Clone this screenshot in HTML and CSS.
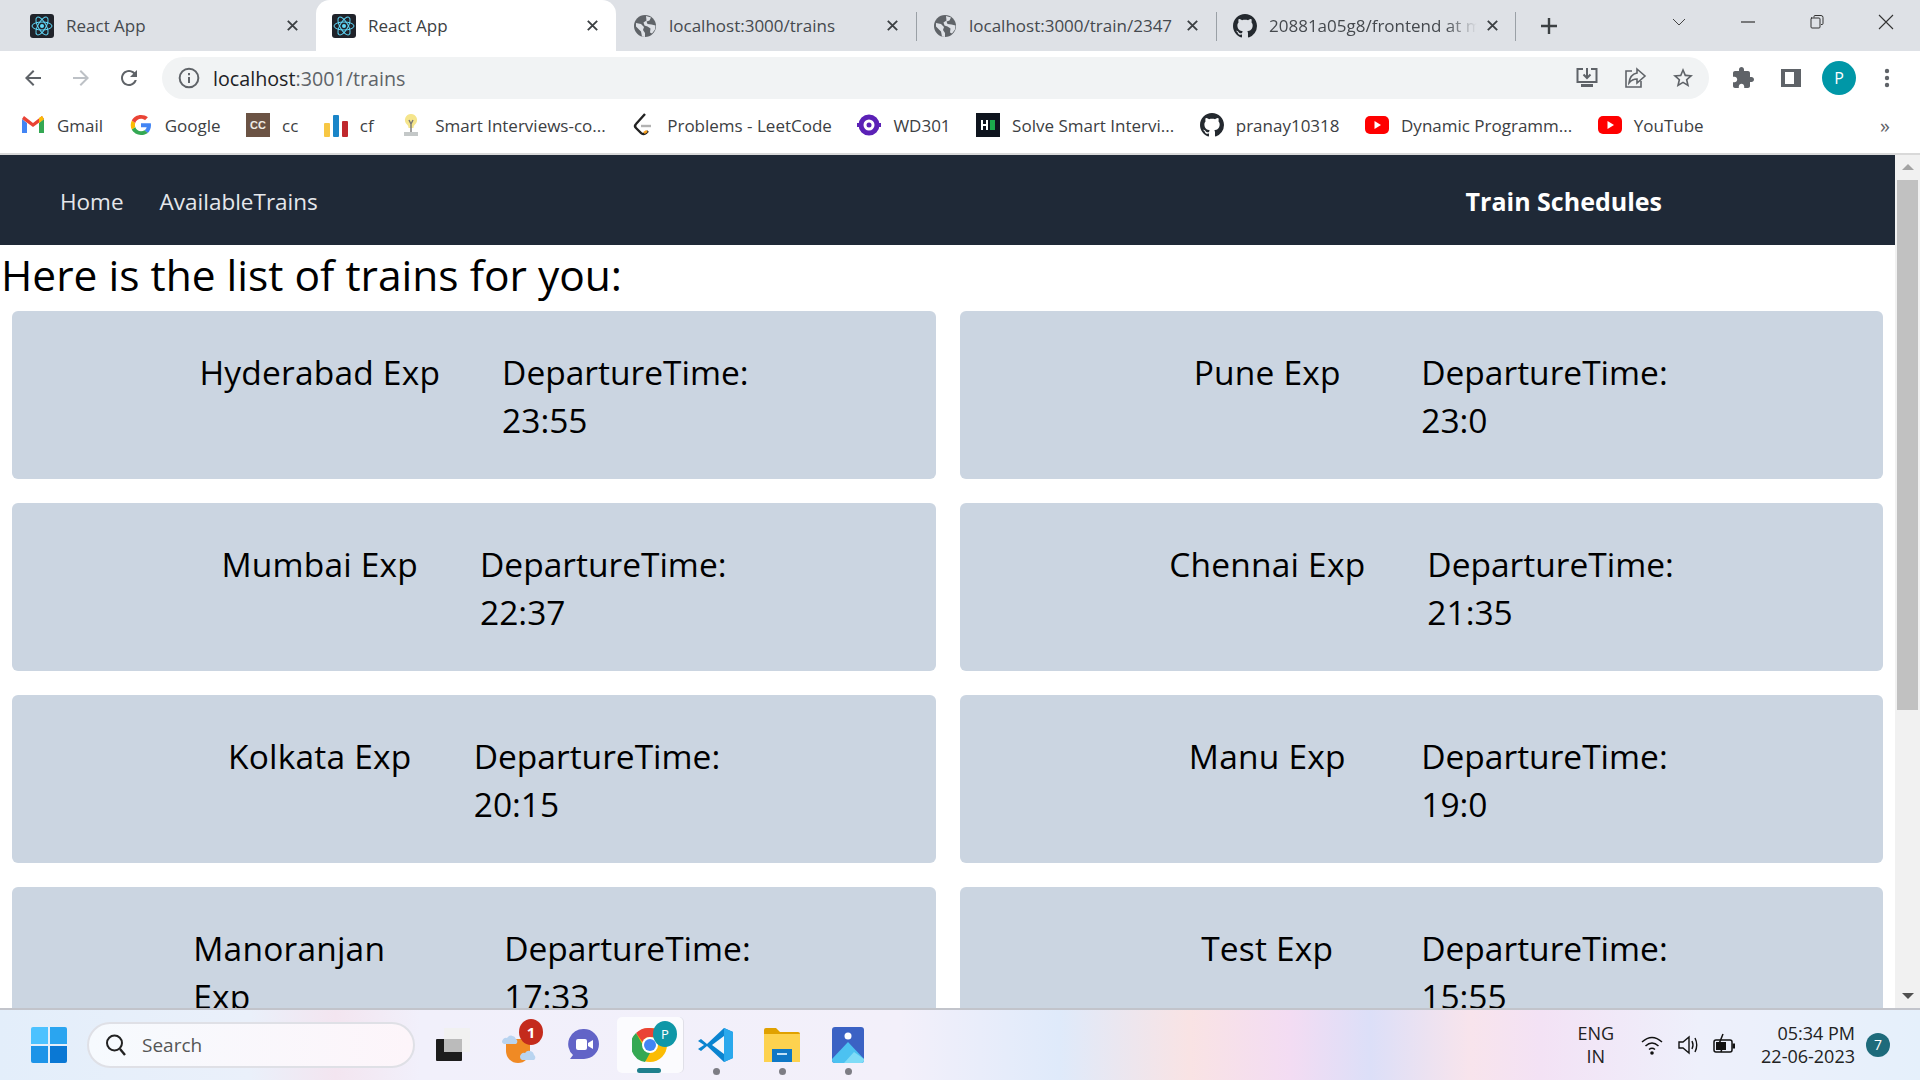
FILE: index.html
```html
<!DOCTYPE html>
<html lang="en">
<head>
    <meta charset="UTF-8">
    <title>React App</title>
    <link rel="stylesheet" href="styles.css">
</head>
<body>
    <svg class="defs" width="0" height="0">
        <symbol id="react" viewBox="0 0 24 24">
            <rect width="24" height="24" rx="3" fill="#20232a"/>
            <g fill="none" stroke="#61dafb" stroke-width="1">
                <ellipse cx="12" cy="12" rx="10" ry="4"/>
                <ellipse cx="12" cy="12" rx="10" ry="4" transform="rotate(60 12 12)"/>
                <ellipse cx="12" cy="12" rx="10" ry="4" transform="rotate(120 12 12)"/>
            </g>
            <circle cx="12" cy="12" r="2" fill="#61dafb"/>
        </symbol>
        <symbol id="globe" viewBox="0 0 24 24">
            <circle cx="12" cy="12" r="11" fill="#5f6368"/>
            <path d="M3 9l5 1 3 3-1 3 2 3v4l-3-.5-1-5-5-5zM13 2l5 1.5-1.5 3-3 1 1 2.500 4 .5 4 1-.5 4-3 4-2-1 .5-4-3-2-3-1-1-3 3-2z" fill="#dee1e6"/>
        </symbol>
        <symbol id="github" viewBox="0 0 16 16">
            <path d="M8 0C3.58 0 0 3.58 0 8c0 3.54 2.29 6.53 5.47 7.59.4.07.55-.17.55-.38 0-.19-.01-.82-.01-1.49-2.01.37-2.53-.49-2.69-.94-.09-.23-.48-.94-.82-1.13-.28-.15-.68-.52-.01-.53.63-.01 1.08.58 1.23.82.72 1.21 1.870.87 2.330.66.07-.52.28-.87.51-1.07-1.78-.2-3.64-.89-3.64-3.95 0-.87.31-1.59.82-2.15-.08-.2-.36-1.02.08-2.12 0 0 .67-.21 2.2.82.64-.18 1.32-.27 2-.27.68 0 1.36.09 2 .27 1.53-1.04 2.2-.82 2.2-.82.44 1.1.16 1.92.08 2.12.51.56.82 1.27.82 2.15 0 3.07-1.87 3.75-3.65 3.95.29.25.54.73.54 1.48 0 1.07-.01 1.93-.01 2.2 0 .21.15.46.55.38A8.013 8.013 0 0016 8c0-4.42-3.58-8-8-8z" fill="#24292f"/>
        </symbol>
        <symbol id="close" viewBox="0 0 16 16">
            <path d="M3 3l10 10M13 3L3 13" fill="none" stroke="#3c4043" stroke-width="2"/>
        </symbol>
        <symbol id="youtube" viewBox="0 0 24 24">
            <rect y="3" width="24" height="18" rx="5" fill="#f00"/>
            <path d="M9.500 8l6.500 4-6.500 4z" fill="#fff"/>
        </symbol>
    </svg>

    <div class="tab-strip">
        <div class="tab tab-first">
            <svg class="tab-icon"><use href="#react"/></svg>
            <span class="tab-title">React App</span>
            <svg class="tab-close"><use href="#close"/></svg>
        </div>
        <div class="tab tab-active">
            <svg class="tab-icon"><use href="#react"/></svg>
            <span class="tab-title">React App</span>
            <svg class="tab-close"><use href="#close"/></svg>
        </div>
        <div class="tab">
            <svg class="tab-icon"><use href="#globe"/></svg>
            <span class="tab-title">localhost:3000/trains</span>
            <svg class="tab-close"><use href="#close"/></svg>
        </div>
        <div class="tab tab-split">
            <svg class="tab-icon"><use href="#globe"/></svg>
            <span class="tab-title">localhost:3000/train/2347</span>
            <svg class="tab-close"><use href="#close"/></svg>
        </div>
        <div class="tab tab-split tab-last">
            <svg class="tab-icon"><use href="#github"/></svg>
            <span class="tab-title tab-fade">20881a05g8/frontend at main</span>
            <svg class="tab-close"><use href="#close"/></svg>
        </div>
        <svg class="new-tab" viewBox="0 0 20 20"><path d="M10 2v16M2 10h16" stroke="#3c4043" stroke-width="2.400"/></svg>
        <div class="window-controls">
            <svg viewBox="0 0 16 16"><path d="M2 5l6 6 6-6" fill="none" stroke="#444" stroke-width="1"/></svg>
            <svg viewBox="0 0 16 16"><path d="M1 8h14" stroke="#333" stroke-width="1.200"/></svg>
            <svg viewBox="0 0 16 16"><path d="M5 3.500V2.500q0-1 1-1h6q2 0 2 2v6q0 1-1 1h-1M2 4h8q1 0 1 1v8q0 1-1 1H3q-1 0-1-1V5q0-1 1-1z" fill="none" stroke="#333" stroke-width="1"/></svg>
            <svg viewBox="0 0 16 16"><path d="M1 1l14 14M15 1L1 15" stroke="#333" stroke-width="1.100"/></svg>
        </div>
    </div>

    <div class="toolbar">
        <svg class="tool-btn" viewBox="0 0 24 24"><path fill="#5f6368" d="M20 11H7.830l5.590-5.590L12 4l-8 8 8 8 1.410-1.410L7.830 13H20v-2z"/></svg>
        <svg class="tool-btn" viewBox="0 0 24 24"><path fill="#bdc1c6" d="M4 11h12.170l-5.590-5.590L12 4l8 8-8 8-1.410-1.410L16.170 13H4v-2z"/></svg>
        <svg class="tool-btn" viewBox="0 0 24 24"><path fill="#5f6368" d="M17.650 6.350C16.200 4.900 14.210 4 12 4c-4.420 0-7.990 3.580-7.990 8s3.570 8 7.990 8c3.730 0 6.840-2.550 7.730-6h-2.080c-.82 2.330-3.040 4-5.650 4-3.310 0-6-2.690-6-6s2.690-6 6-6c1.660 0 3.140.69 4.220 1.780L13 11h7V4l-2.350 2.350z"/></svg>
        <div class="omnibox">
            <svg class="omni-info" viewBox="0 0 20 20"><circle cx="10" cy="10" r="8.500" fill="none" stroke="#5f6368" stroke-width="1.800"/><path d="M10 9v5.500M10 5.500v2" stroke="#5f6368" stroke-width="1.800"/></svg>
            <span class="url"><span class="url-host">localhost</span>:3001/trains</span>
            <div class="omni-actions">
                <svg viewBox="0 0 24 24"><path d="M8 3H2.500v13h19V3H16" fill="none" stroke="#5f6368" stroke-width="2"/><path d="M12 2v10M8.500 8.500L12 12l3.500-3.500" fill="none" stroke="#5f6368" stroke-width="2"/><path d="M6 18h12v3H6z" fill="#5f6368"/></svg>
                <svg viewBox="0 0 24 24"><path d="M9 5H3v16h15v-6" fill="none" stroke="#5f6368" stroke-width="1.600"/><path d="M14 3l8 7-8 7v-4c-4 0-6 1.500-8 4 .5-5 3-9 8-10z" fill="none" stroke="#5f6368" stroke-width="1.600"/></svg>
                <svg viewBox="0 0 24 24"><path fill="#5f6368" d="M22 9.240l-7.190-.62L12 2 9.190 8.630 2 9.240l5.460 4.730L5.820 21 12 17.270 18.180 21l-1.630-7.030L22 9.240zM12 15.400l-3.760 2.270 1-4.280-3.320-2.880 4.380-.38L12 6.100l1.710 4.040 4.380.38-3.320 2.880 1 4.280L12 15.400z"/></svg>
            </div>
        </div>
        <div class="toolbar-end">
            <svg viewBox="0 0 24 24"><path fill="#5f6368" d="M20.500 11H19V7c0-1.100-.9-2-2-2h-4V3.500C13 2.120 11.880 1 10.500 1S8 2.120 8 3.500V5H4c-1.100 0-1.990.9-1.990 2v3.800H3.500c1.490 0 2.700 1.210 2.700 2.700s-1.210 2.700-2.700 2.700H2V20c0 1.100.9 2 2 2h3.800v-1.500c0-1.490 1.210-2.700 2.700-2.700 1.490 0 2.700 1.210 2.700 2.700V22H17c1.100 0 2-.9 2-2v-4h1.500c1.380 0 2.500-1.120 2.500-2.500S21.880 11 20.500 11z"/></svg>
            <svg viewBox="0 0 24 24"><path fill="#5f6368" fill-rule="evenodd" d="M2 3h20v18H2zM6 6v12h9V6z"/></svg>
            <span class="avatar">P</span>
            <svg viewBox="0 0 24 24"><circle cx="12" cy="5" r="2.200" fill="#5f6368"/><circle cx="12" cy="12" r="2.200" fill="#5f6368"/><circle cx="12" cy="19" r="2.200" fill="#5f6368"/></svg>
        </div>
    </div>

    <div class="bookmarks">
        <a class="bookmark">
            <svg viewBox="0 0 24 24"><path d="M1 6v14h5V10z" fill="#4285f4"/><path d="M23 6v14h-5V10z" fill="#34a853"/><path d="M1 6l11 8 11-8-2-3-9 7-9-7z" fill="#ea4335"/><path d="M18 10l5-4-2-3-3 2z" fill="#fbbc04"/></svg>
            Gmail
        </a>
        <a class="bookmark">
            <svg viewBox="0 0 24 24"><path d="M22 12.200c0-.7-.1-1.400-.2-2H12v4h5.600c-.2 1.300-1 2.400-2.100 3.100l3.300 2.600c2-1.800 3.200-4.500 3.200-7.700z" fill="#4285f4"/><path d="M12 22c2.800 0 5-.9 6.800-2.100l-3.300-2.600c-.9.600-2.100 1-3.500 1-2.700 0-5-1.800-5.800-4.300L2.800 16.600C4.500 19.800 8 22 12 22z" fill="#34a853"/><path d="M6.200 14c-.4-1.300-.4-2.700 0-4L2.800 7.400c-1.400 2.800-1.400 6.400 0 9.200z" fill="#fbbc04"/><path d="M12 5.700c1.500 0 2.900.5 4 1.500l2.900-2.900C17.100 2.700 14.700 2 12 2 8 2 4.500 4.200 2.800 7.400L6.200 10C7 7.500 9.300 5.700 12 5.700z" fill="#ea4335"/></svg>
            Google
        </a>
        <a class="bookmark">
            <svg viewBox="0 0 24 24"><rect width="24" height="24" fill="#6b5344"/><text x="12" y="16" text-anchor="middle" class="cc-mark">CC</text></svg>
            cc
        </a>
        <a class="bookmark">
            <svg viewBox="0 0 24 24"><rect x="0" y="10" width="6" height="14" rx="1" fill="#f7c744"/><rect x="9" y="2" width="6" height="22" rx="1" fill="#1a85c8"/><rect x="18" y="8" width="6" height="16" rx="1" fill="#c0282d"/></svg>
            cf
        </a>
        <a class="bookmark">
            <svg viewBox="0 0 24 24"><path d="M12 1a6 6 0 0 0-4 10.500c1 1 1.500 2 1.500 3.500h5c0-1.500.5-2.500 1.500-3.500A6 6 0 0 0 12 1z" fill="#f5e58c"/><path d="M10 7l2 4 2-4M12 11v8" fill="none" stroke="#777" stroke-width="1.400"/><path d="M5 19h14v4H5z" fill="#c4c8c8"/></svg>
            Smart Interviews-co...
        </a>
        <a class="bookmark">
            <svg viewBox="0 0 24 24"><path d="M14 1L5 11q-2 2 0 4l5 5q2 2 5 0l2-2" fill="none" stroke="#222" stroke-width="2.400"/><path d="M16 18l-3 2" stroke="#f89f1b" stroke-width="2.600"/><path d="M10 13h10" stroke="#b3b3b3" stroke-width="2.400"/></svg>
            Problems - LeetCode
        </a>
        <a class="bookmark">
            <svg viewBox="0 0 24 24"><circle cx="12" cy="12" r="8" fill="none" stroke="#5b21b6" stroke-width="5"/><circle cx="12" cy="12" r="2.500" fill="#5b21b6"/><path d="M0 12h3M24 12h-3" stroke="#5b21b6" stroke-width="4"/></svg>
            WD301
        </a>
        <a class="bookmark">
            <svg viewBox="0 0 24 24"><rect width="24" height="24" fill="#0e141e"/><path d="M6 7v10M11 7v10M6 12h5" stroke="#fff" stroke-width="2"/><rect x="14" y="7" width="5" height="10" fill="#1ba94c"/></svg>
            Solve Smart Intervi...
        </a>
        <a class="bookmark">
            <svg><use href="#github"/></svg>
            pranay10318
        </a>
        <a class="bookmark">
            <svg><use href="#youtube"/></svg>
            Dynamic Programm...
        </a>
        <a class="bookmark">
            <svg><use href="#youtube"/></svg>
            YouTube
        </a>
        <span class="more-bookmarks">»</span>
    </div>

    <div class="viewport">
        <div class="page">
            <nav class="navbar">
                <div class="nav-links">
                    <a>Home</a>
                    <a>AvailableTrains</a>
                </div>
                <span class="brand">Train Schedules</span>
            </nav>
            <h1 class="list-title">Here is the list of trains for you:</h1>
            <div class="train-grid">
                <div class="train-card">
                    <div class="train-name">Hyderabad Exp</div>
                    <div class="train-time">DepartureTime: 23:55</div>
                </div>
                <div class="train-card">
                    <div class="train-name">Pune Exp</div>
                    <div class="train-time">DepartureTime: 23:0</div>
                </div>
                <div class="train-card">
                    <div class="train-name">Mumbai Exp</div>
                    <div class="train-time">DepartureTime: 22:37</div>
                </div>
                <div class="train-card">
                    <div class="train-name">Chennai Exp</div>
                    <div class="train-time">DepartureTime: 21:35</div>
                </div>
                <div class="train-card">
                    <div class="train-name">Kolkata Exp</div>
                    <div class="train-time">DepartureTime: 20:15</div>
                </div>
                <div class="train-card">
                    <div class="train-name">Manu Exp</div>
                    <div class="train-time">DepartureTime: 19:0</div>
                </div>
                <div class="train-card">
                    <div class="train-name train-name-long">Manoranjan<br>Exp</div>
                    <div class="train-time">DepartureTime: 17:33</div>
                </div>
                <div class="train-card">
                    <div class="train-name">Test Exp</div>
                    <div class="train-time">DepartureTime: 15:55</div>
                </div>
            </div>
        </div>
        <div class="scrollbar">
            <span class="arrow-up"></span>
            <div class="thumb-track"><div class="thumb"></div></div>
            <span class="arrow-down"></span>
        </div>
    </div>

    <div class="taskbar">
        <svg class="start" viewBox="0 0 36 36">
            <path d="M0 2q0-2 2-2h15v17H0z" fill="#4cc2ff"/>
            <path d="M19 0h15q2 0 2 2v15H19z" fill="#2aa5f0"/>
            <path d="M0 19h17v17H2q-2 0-2-2z" fill="#1d94e8"/>
            <path d="M19 19h17v15q0 2-2 2H19z" fill="#0a78d4"/>
        </svg>
        <div class="search-box">
            <svg viewBox="0 0 24 24"><circle cx="10.500" cy="10" r="7.500" fill="none" stroke="#222" stroke-width="2"/><path d="M16 16l5 6" stroke="#222" stroke-width="2.400"/></svg>
            <span>Search</span>
        </div>
        <div class="task-apps">
            <div class="task-app">
                <svg viewBox="0 0 36 36"><rect x="2" y="12" width="26" height="22" rx="1" fill="#1c1c1c"/><rect x="10" y="1" width="26" height="24" rx="1" fill="#f1f1f1"/><rect x="10" y="12" width="18" height="13" fill="#bbb"/></svg>
            </div>
            <div class="task-app">
                <svg viewBox="0 0 36 36"><path d="M6 12h24v12a12 12 0 0 1-24 0z" fill="#f08a24"/><path d="M2 15a4 4 0 0 1 5-4 5 5 0 0 1 9 1 3 3 0 0 1 0 5H4q-2-1-2-2zM20 30a4 4 0 0 1 5-4 5 5 0 0 1 9 2 3 3 0 0 1 0 5H22q-2-1-2-3z" fill="#b9d4f0"/></svg>
                <span class="task-badge">1</span>
            </div>
            <div class="task-app">
                <svg viewBox="0 0 36 36"><path d="M18 2a15 15 0 0 1 15 15 15 15 0 0 1-15 15H4l3-4a15 15 0 0 1 11-26z" fill="#6264c7"/><rect x="10" y="12" width="11" height="11" rx="2" fill="#fff"/><path d="M22 16l5-3v9l-5-3z" fill="#fff"/></svg>
            </div>
            <div class="task-app task-app-active">
                <svg viewBox="0 0 36 36"><circle cx="18" cy="18" r="17" fill="#fbbc04"/><path d="M18 1a17 17 0 0 1 15 9H18a8 8 0 0 0-7.500 5L4 6A17 17 0 0 1 18 1z" fill="#ea4335"/><path d="M4 6l8 14 6 6-5 9A17 17 0 0 1 4 6z" fill="#34a853"/><circle cx="18" cy="18" r="8" fill="#fff"/><circle cx="18" cy="18" r="6" fill="#4285f4"/></svg>
                <span class="task-profile">P</span>
                <i class="task-underline"></i>
            </div>
            <div class="task-app task-app-open">
                <svg viewBox="0 0 36 36"><path d="M26 1l9 4v26l-9 4L9 19l-6 5-3-2 6-4-6-4 3-2 6 5z" fill="#0a84d0"/><path d="M26 9v18L14 18z" fill="#f4f6fb"/><path d="M26 1l9 4v26l-9 4z" fill="#2aa8ec"/></svg>
            </div>
            <div class="task-app task-app-open">
                <svg viewBox="0 0 36 36"><path d="M0 3q0-2 2-2h10l4 4h18q2 0 2 2v4H0z" fill="#e0a100"/><path d="M0 7h36v28H0z" fill="#fdd24f"/><path d="M8 22h20v13H8z" fill="#0f78c6"/><path d="M13 27h10" stroke="#bfe1f7" stroke-width="2"/></svg>
            </div>
            <div class="task-app task-app-open">
                <svg viewBox="0 0 36 36"><rect x="2" width="32" height="36" rx="3" fill="#3b62c4"/><circle cx="18" cy="9" r="3.500" fill="#fff"/><path d="M2 32l16-17 16 17v1q0 3-3 3H5q-3 0-3-3z" fill="#4cc2f1"/><path d="M14 36l10-11 10 7v1q0 3-3 3z" fill="#7fdcf7"/></svg>
            </div>
        </div>
        <div class="tray">
            <div class="tray-lang">ENG<br>IN</div>
            <div class="tray-icons">
                <svg viewBox="0 0 24 24"><path d="M2 9q10-9 20 0M5.500 13q6.500-6 13 0M9 16.500q3-2.500 6 0" fill="none" stroke="#111" stroke-width="1.500"/><circle cx="12" cy="20" r="1.800" fill="#111"/></svg>
                <svg viewBox="0 0 24 24"><path d="M3 9h4l6-5v16l-6-5H3z" fill="none" stroke="#111" stroke-width="1.400"/><path d="M16 8q2 4 0 8M19 5q3.500 7 0 14" fill="none" stroke="#111" stroke-width="1.400"/></svg>
                <svg viewBox="0 0 24 24"><rect x="2" y="7" width="18" height="12" rx="2" fill="none" stroke="#111" stroke-width="1.500"/><rect x="20.500" y="10.500" width="2.500" height="5" fill="#111"/><rect x="4" y="9" width="10" height="8" fill="#111"/><path d="M11 1L7 11h4l-2 8" fill="none" stroke="#111" stroke-width="1.500"/></svg>
            </div>
            <div class="tray-clock">05:34 PM<br>22-06-2023</div>
            <span class="tray-badge">7</span>
        </div>
    </div>
</body>
</html>
```

FILE: styles.css
```css
* {
    box-sizing: border-box;
}

html, body {
    height: 100%;
    margin: 0;
    overflow: hidden;
}

body {
    display: flex;
    flex-direction: column;
    font-family: "Open Sans", "Noto Sans", sans-serif;
    color: #000;
}

.defs {
    position: absolute;
}

/* browser tabs */
.tab-strip {
    display: flex;
    align-items: center;
    height: 51px;
    padding-left: 16px;
    background: #dee1e6;
    flex-shrink: 0;
}

.tab {
    display: flex;
    align-items: center;
    width: 300px;
    height: 100%;
    padding: 0 16px 0 17px;
    position: relative;
    color: #45494e;
    font-size: 17px;
}

.tab-first {
    padding-left: 14px;
}

.tab-active {
    padding-left: 16px;
    background: #fff;
    border-radius: 14px 14px 0 0;
    color: #3c4043;
}

.tab-split::before,
.tab-last::after {
    content: "";
    position: absolute;
    top: 12px;
    bottom: 10px;
    width: 1px;
    background: #9aa0a6;
}

.tab-split::before {
    left: 0;
}

.tab-last::after {
    right: 0;
}

.tab-icon {
    width: 24px;
    height: 24px;
    flex-shrink: 0;
}

.tab-title {
    flex: 1;
    margin-left: 12px;
    white-space: nowrap;
    overflow: hidden;
}

.tab-fade {
    -webkit-mask-image: linear-gradient(to right, #000 85%, transparent);
    mask-image: linear-gradient(to right, #000 85%, transparent);
}

.tab-close {
    width: 15px;
    height: 15px;
    margin-left: 8px;
    flex-shrink: 0;
}

.new-tab {
    width: 20px;
    height: 20px;
    margin-left: 23px;
}

.window-controls {
    display: flex;
    gap: 53px;
    margin-left: auto;
    margin-right: 26px;
    margin-top: -8px;
}

.window-controls svg {
    width: 16px;
    height: 16px;
}

/* address bar */
.toolbar {
    display: flex;
    align-items: center;
    height: 54px;
    padding: 0 6px 0 21px;
    gap: 24px;
    background: #fff;
    flex-shrink: 0;
}

.tool-btn {
    width: 24px;
    height: 24px;
}

.omnibox {
    display: flex;
    align-items: center;
    width: 1547px;
    height: 42px;
    margin-left: -3px;
    padding: 0 14px 0 16px;
    border-radius: 21px;
    background: #f1f3f4;
}

.omni-info {
    width: 22px;
    height: 22px;
}

.url {
    margin-left: 13px;
    color: #5f6368;
    font-size: 19.700px;
}

.url-host {
    color: #202124;
}

.omni-actions {
    display: flex;
    gap: 24px;
    margin-left: auto;
}

.omni-actions svg {
    width: 24px;
    height: 24px;
}

.toolbar-end {
    display: flex;
    align-items: center;
    gap: 24px;
    margin-left: -2px;
}

.toolbar-end svg {
    width: 24px;
    height: 24px;
}

.avatar {
    width: 34px;
    height: 34px;
    margin: 0 -5px;
    border-radius: 50%;
    background: #0097a7;
    color: #fff;
    font-size: 16px;
    line-height: 34px;
    text-align: center;
}

/* bookmarks bar */
.bookmarks {
    display: flex;
    align-items: center;
    gap: 25.500px;
    height: 50px;
    padding: 0 21px 8px;
    background: #fff;
    border-bottom: 2px solid #d9d9d9;
    flex-shrink: 0;
}

.bookmark {
    display: flex;
    align-items: center;
    gap: 12px;
    color: #3c4043;
    font-size: 17px;
    white-space: nowrap;
}

.bookmark svg {
    width: 24px;
    height: 24px;
    flex-shrink: 0;
}

.cc-mark {
    font-family: "Liberation Sans", sans-serif;
    font-size: 11px;
    font-weight: 700;
    fill: #f0ece6;
}

.more-bookmarks {
    margin-left: auto;
    margin-right: 9px;
    color: #5f6368;
    font-size: 20px;
}

/* page in the browser */
.viewport {
    display: flex;
    flex: 1;
    min-height: 0;
}

.page {
    flex: 1;
    min-width: 0;
    overflow: hidden;
}

.navbar {
    display: flex;
    justify-content: space-between;
    align-items: center;
    height: 90px;
    padding: 2px 233px 0 60px;
    background: #1f2937;
}

.nav-links {
    display: flex;
    gap: 36px;
    color: #e5e7eb;
    font-size: 22.500px;
}

.brand {
    color: #fff;
    font-size: 25px;
    font-weight: 700;
}

.list-title {
    margin: 0;
    padding-left: 1px;
    font-size: 42.500px;
    font-weight: 400;
    line-height: 60px;
}

.train-grid {
    display: grid;
    grid-template-columns: 1fr 1fr;
    gap: 24px;
    padding: 6px 12px 0;
}

.train-card {
    display: flex;
    justify-content: center;
    height: 168px;
    padding-top: 37px;
    border-radius: 6px;
    background: #cbd5e1;
    font-size: 33.500px;
    line-height: 48px;
}

.train-name {
    min-width: 308px;
    padding: 0 62px;
    letter-spacing: 0.2px;
    text-align: center;
}

.train-name-long {
    width: 373px;
    margin-left: -4px;
    text-align: left;
}

.train-time {
    width: 308px;
}

.scrollbar {
    display: flex;
    flex-direction: column;
    align-items: center;
    width: 25px;
    background: #f1f1f1;
}

.arrow-up {
    margin: 9px 0 10px;
    border: 6px solid transparent;
    border-top: 0;
    border-bottom: 6px solid #a3a3a3;
}

.thumb-track {
    flex: 1;
    width: 21px;
}

.thumb {
    height: 530px;
    background: #c1c1c1;
}

.arrow-down {
    margin: 6px 0 9px;
    border: 6px solid transparent;
    border-bottom: 0;
    border-top: 6px solid #505050;
}

/* windows taskbar */
.taskbar {
    display: flex;
    align-items: center;
    height: 72px;
    padding-left: 31px;
    border-top: 2px solid #c2c4cb;
    background: linear-gradient(to right, #e3eefa 0, #eaf0fa 250px, #f3e5f0 335px, #f1f0fb 420px, #f3f0fa 900px, #dfeafa 1060px, #f9e3e4 1190px, #f3dcf3 1290px, #dcdff8 1370px, #f8e4ec 1470px, #f3e2f5 1540px, #eef0fb 1700px, #e5f0fb 1920px);
    flex-shrink: 0;
}

.start {
    width: 36px;
    height: 36px;
}

.search-box {
    display: flex;
    align-items: center;
    gap: 14px;
    width: 328px;
    height: 46px;
    margin-left: 20px;
    padding-left: 15px;
    border-radius: 23px;
    border: 2px solid #dfe0e6;
    background: linear-gradient(to right, #f6fafe, #fdf5fa);
    color: #555;
    font-size: 19px;
}

.search-box svg {
    width: 24px;
    height: 24px;
}

.task-apps {
    display: flex;
    align-items: center;
    margin-left: 4px;
}

.task-app {
    display: flex;
    align-items: center;
    justify-content: center;
    width: 66px;
    height: 56px;
    position: relative;
}

.task-app svg {
    width: 36px;
    height: 36px;
}

.task-app-active {
    border-radius: 5px;
    background: rgba(255, 255, 255, 0.7);
    box-shadow: 1px 0 0 #e0e0e8;
}

.task-app-open::after {
    content: "";
    position: absolute;
    bottom: -2px;
    left: 30px;
    width: 7px;
    height: 7px;
    border-radius: 50%;
    background: #7d7d84;
}

.task-underline {
    position: absolute;
    bottom: 0;
    left: 20px;
    width: 24px;
    height: 5px;
    border-radius: 3px;
    background: #1e7f8d;
}

.task-badge {
    position: absolute;
    top: 2px;
    right: 8px;
    width: 24px;
    height: 26px;
    border-radius: 50%;
    background: #c42b1c;
    color: #fff;
    font-size: 15px;
    font-weight: 700;
    line-height: 26px;
    text-align: center;
}

.task-profile {
    position: absolute;
    top: 4px;
    right: 6px;
    width: 24px;
    height: 26px;
    border-radius: 50%;
    background: #0f97a7;
    color: #fff;
    font-size: 13px;
    line-height: 26px;
    text-align: center;
}

.tray {
    display: flex;
    align-items: center;
    margin-left: auto;
    padding-right: 53px;
    color: #222;
    font-size: 18px;
    line-height: 23px;
}

.tray-lang {
    text-align: center;
}

.tray-icons {
    display: flex;
    gap: 12px;
    margin: 0 25px 0 26px;
}

.tray-icons svg {
    width: 24px;
    height: 24px;
}

.tray-clock {
    text-align: right;
}

.tray-badge {
    width: 24px;
    height: 24px;
    margin-left: 11px;
    margin-right: -23px;
    border-radius: 50%;
    background: #1e6b7b;
    color: #fff;
    font-size: 14px;
    line-height: 24px;
    text-align: center;
}
```
